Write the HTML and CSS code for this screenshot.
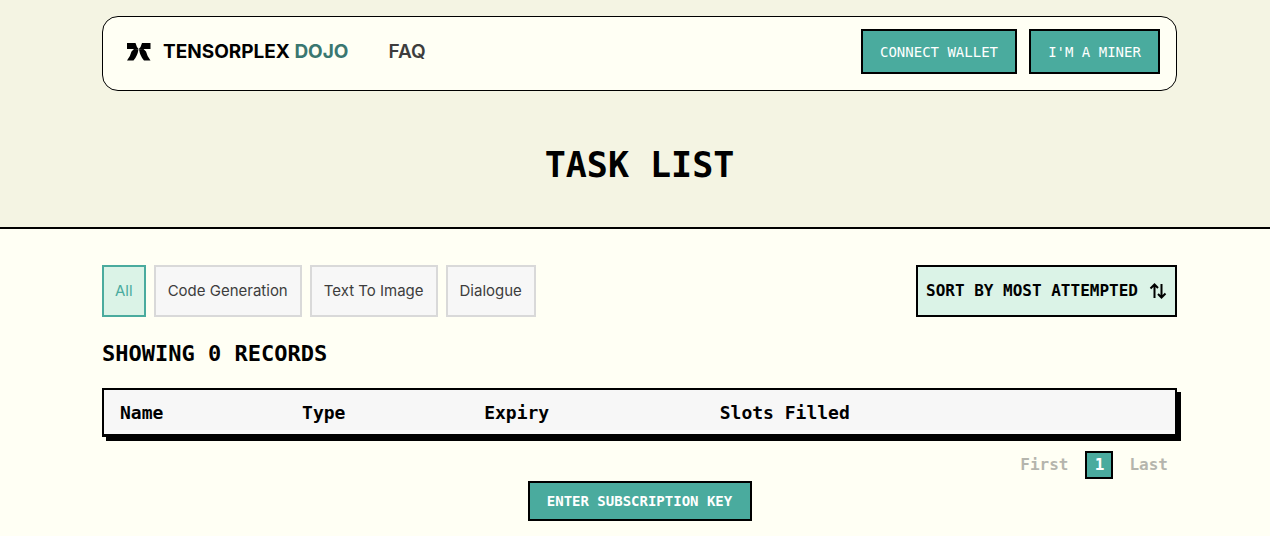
FILE: index.html
```html
<!DOCTYPE html>
<html lang="en">
<head>
<meta charset="utf-8">
<meta name="viewport" content="width=device-width, initial-scale=1">
<title>Tensorplex Dojo</title>
<link rel="stylesheet" href="styles.css">
</head>
<body>
<header class="hero">
  <nav class="nav">
    <a class="brand" href="#">
      <svg class="brand-mark" viewBox="0 0 24 18" aria-hidden="true">
        <path d="M0 0H8.500Q9.500 4 11.600 6H0ZM23.500 0H15Q14 4 11.900 6H23.500ZM11.500 6.200Q10.500 13 6.500 17.500H0Q3.500 13 4.500 8.500L7 6ZM12 6.200Q13 13 17 17.500H23.500Q20 13 19 8.500L16.500 6Z"/>
      </svg>
      <span class="brand-name">TENSORPLEX <span class="brand-sub">DOJO</span></span>
    </a>
    <a class="nav-link" href="#">FAQ</a>
    <div class="nav-actions">
      <button class="btn btn-wallet" type="button">CONNECT WALLET</button>
      <button class="btn btn-miner" type="button">I'M A MINER</button>
    </div>
  </nav>
  <h1 class="title">TASK LIST</h1>
</header>
<main class="content">
  <div class="toolbar">
    <div class="filters">
      <button class="filter filter-active" type="button">All</button>
      <button class="filter" type="button">Code Generation</button>
      <button class="filter" type="button">Text To Image</button>
      <button class="filter" type="button">Dialogue</button>
    </div>
    <button class="sort" type="button">
      <span>SORT BY MOST ATTEMPTED</span>
      <svg class="sort-icon" viewBox="0 0 18 16" aria-hidden="true">
        <path d="M5.500 15V1.500M1.500 5.500L5.500 1.500L9 5M12.500 1V14.500M9 11L12.500 14.500L16.500 10.500"/>
      </svg>
    </button>
  </div>
  <h2 class="count">SHOWING 0 RECORDS</h2>
  <table class="tasks">
    <thead>
      <tr>
        <th class="col-name" scope="col">Name</th>
        <th class="col-type" scope="col">Type</th>
        <th class="col-expiry" scope="col">Expiry</th>
        <th class="col-slots" scope="col">Slots Filled</th>
      </tr>
    </thead>
  </table>
  <div class="pager">
    <button class="page-link" type="button" disabled>First</button>
    <button class="page-current" type="button">1</button>
    <button class="page-link" type="button" disabled>Last</button>
  </div>
  <button class="btn btn-key" type="button">ENTER SUBSCRIPTION KEY</button>
</main>
</body>
</html>
```
FILE: styles.css
```css
* {
  box-sizing: border-box;
}

body {
  margin: 0;
  background: #fffff4;
  color: #000;
  font-family: Inter, sans-serif;
}

button {
  margin: 0;
  cursor: pointer;
}

.hero {
  padding: 16px 93px 0 102px;
  background: #f4f4e3;
  border-bottom: 2px solid #000;
}

.nav {
  display: flex;
  align-items: center;
  padding: 12px 16px 16px 24px;
  background: #fffff4;
  border: 1px solid #000;
  border-radius: 16px;
}

.brand {
  display: flex;
  align-items: center;
  gap: 12px;
  color: #000;
  text-decoration: none;
}

.brand-mark {
  width: 24px;
  height: 18px;
}

.brand-name {
  font-size: 19px;
  font-weight: 700;
  line-height: 24px;
  white-space: nowrap;
}

.brand-sub {
  color: #3a7770;
}

.nav-link {
  margin-left: 40px;
  color: #3d3d3d;
  font-size: 19px;
  font-weight: 600;
  line-height: 24px;
  text-decoration: none;
}

.nav-actions {
  display: flex;
  gap: 12px;
  margin-left: auto;
}

.btn {
  background: #4aab9e;
  border: 2px solid #000;
  color: #fff;
  font: 400 14px/20px "DejaVu Sans Mono", monospace;
  white-space: nowrap;
}

.btn-wallet {
  min-width: 156px;
  height: 45px;
}

.btn-miner {
  min-width: 131px;
  height: 45px;
}

.title {
  margin: 0;
  padding: 52px 0 40px;
  font: 700 35px/44px "DejaVu Sans Mono", monospace;
  text-align: center;
}

.content {
  display: flex;
  flex-direction: column;
  padding: 36px 93px 15px 102px;
}

.toolbar {
  display: flex;
  justify-content: space-between;
}

.filters {
  display: flex;
  gap: 8px;
}

.filter {
  height: 52px;
  padding: 0 12px;
  background: #f7f7f7;
  border: 2px solid #d9d9d9;
  color: #3d3d3d;
  font: 400 15px/24px Inter, sans-serif;
}

.filter-active {
  padding: 0 11px;
  background: #dbf3e7;
  border-color: #4aab9e;
  color: #4aab9e;
}

.sort {
  display: flex;
  align-items: center;
  justify-content: space-between;
  min-width: 261px;
  height: 52px;
  padding: 0 8px;
  background: #dbf3e7;
  border: 2px solid #000;
  color: #000;
  font: 700 16px/24px "DejaVu Sans Mono", monospace;
}

.sort-icon {
  width: 18px;
  height: 16px;
  fill: none;
  stroke: #000;
  stroke-width: 2;
}

.count {
  margin: 21px 0 18px;
  font: 700 22px/32px "DejaVu Sans Mono", monospace;
}

.tasks {
  width: 100%;
  table-layout: fixed;
  border: 2px solid #000;
  border-bottom-width: 3px;
  border-spacing: 0;
  background: #f7f7f7;
  box-shadow: 4px 4px 0 #000;
}

.tasks th {
  padding: 11px 16px 9px;
  font: 700 18px/24px "DejaVu Sans Mono", monospace;
  text-align: left;
}

.col-name,
.col-type {
  width: 17%;
}

.col-expiry {
  width: 22%;
}

.col-slots {
  width: 44%;
}

.pager {
  display: flex;
  justify-content: flex-end;
  gap: 8px;
  margin-top: 14px;
}

.page-link,
.page-current {
  height: 28px;
  font: 700 16px/24px "DejaVu Sans Mono", monospace;
}

.page-link {
  padding: 0 9px 0 8px;
  background: none;
  border: 0;
  color: #b5b5ad;
}

.page-current {
  width: 28px;
  padding: 0;
  background: #4aab9e;
  border: 2px solid #000;
  color: #fff;
}

.btn-key {
  align-self: center;
  min-width: 224px;
  height: 40px;
  margin-top: 2px;
  font-weight: 700;
}
```
